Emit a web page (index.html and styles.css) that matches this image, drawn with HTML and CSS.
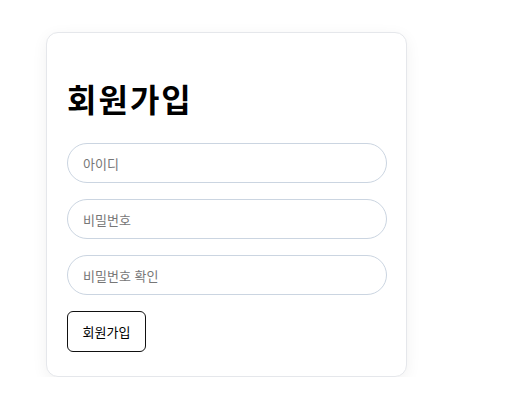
FILE: index.html
```html
<!DOCTYPE html>
<html lang="ko">
<head>
<meta charset="utf-8">
<link rel="stylesheet" href="styles.css">
</head>
<body>
<div class="page">
  <div class="card">
    <h1 class="title">회원가입</h1>
    <form class="form">
      <input class="field" type="text" placeholder="아이디">
      <input class="field" type="password" placeholder="비밀번호">
      <input class="field" type="password" placeholder="비밀번호 확인">
      <div class="actions"><button class="btn" type="button">회원가입</button></div>
    </form>
  </div>
</div>
</body>
</html>
```
FILE: styles.css
```css
* { box-sizing: border-box; }
html, body { margin: 0; background: #fff; }
body { font-family: "Noto Sans CJK KR", "Noto Sans", sans-serif; color: #000; }
.page { padding: 32px 0 0 46px; }
.card {
  width: 361px;
  border: 1px solid #e5e7eb;
  border-radius: 12px;
  background: #fff;
  box-shadow: 0 4px 16px rgba(0,0,0,0.06);
  padding: 20px 20px 24px;
}
.title {
  font-size: 32px;
  font-weight: 700;
  letter-spacing: 2px;
  margin: 22px 0 22px;
  line-height: 46px;
}
.form { display: flex; flex-direction: column; gap: 16px; }
.field {
  width: 320px;
  height: 40px;
  border: 1px solid #cbd5e1;
  border-radius: 20px;
  padding: 0 15px;
  font-family: inherit;
  font-size: 13px;
  color: #333;
  outline: none;
  background: #fff;
}
.field::placeholder { color: #777; }
.actions { display: flex; }
.btn {
  height: 41px;
  width: 79px;
  border: 1px solid #111;
  border-radius: 6px;
  background: #fff;
  font-family: inherit;
  font-size: 13px;
  color: #000;
  padding: 0;
}
```
